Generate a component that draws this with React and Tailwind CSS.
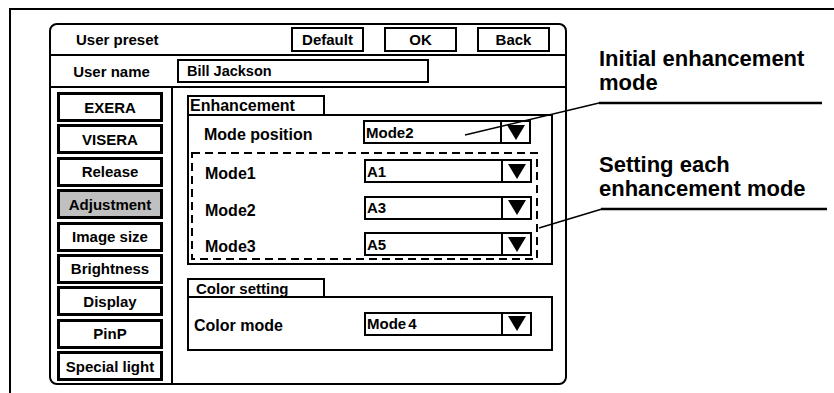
import React from "react";

const Arrow = () => (
  <svg width="18" height="15" viewBox="0 0 18 15">
    <polygon points="0,0 18,0 9,15" fill="black" />
  </svg>
);

function Select({ children }) {
  return (
    <div className="flex h-[24px] w-[168px] shrink-0 border-2 border-black bg-white">
      <div className="flex flex-1 items-center pl-[1px] text-[15px] leading-none">{children}</div>
      <div className="flex w-[29px] items-center justify-center border-l-2 border-black">
        <Arrow />
      </div>
    </div>
  );
}

function Row({ label, value, labelClass = "w-[159px]" }) {
  return (
    <div className="relative flex h-[24px] items-start">
      <div className={`${labelClass} mt-[7px] text-[16px] leading-[16px]`}>{label}</div>
      <Select>{value}</Select>
    </div>
  );
}

const sideItems = [
  "EXERA",
  "VISERA",
  "Release",
  "Adjustment",
  "Image size",
  "Brightness",
  "Display",
  "PinP",
  "Special light",
];

export default function App() {
  return (
    <div
      className="relative h-[393px] w-[834px] overflow-hidden bg-white font-bold text-black"
      style={{ fontFamily: '"Liberation Sans", Arial, sans-serif' }}
    >
      <div className="ml-[9px] mt-[8px] flex h-[385px] border-l-2 border-t-2 border-black">
        {/* Panel */}
        <div className="ml-[38px] mt-[13px] flex h-[362px] w-[518px] shrink-0 flex-col rounded-[8px] border-2 border-black bg-white">
          {/* Header row */}
          <div className="flex h-[31px] shrink-0 items-center border-b-2 border-black pl-[25px] pr-[15px]">
            <div className="text-[15px] leading-none">User preset</div>
            <div className="ml-auto flex gap-[20px]">
              <div className="flex h-[25px] w-[73px] items-center justify-center border-2 border-black text-[15px] leading-none">
                Default
              </div>
              <div className="flex h-[25px] w-[73px] items-center justify-center border-2 border-black text-[15px] leading-none">
                OK
              </div>
              <div className="flex h-[25px] w-[73px] items-center justify-center border-2 border-black text-[15px] leading-none">
                Back
              </div>
            </div>
          </div>
          {/* User name row */}
          <div className="flex h-[32px] shrink-0 items-center border-b-2 border-black">
            <div className="w-[121px] text-center text-[15px] leading-none">User name</div>
            <div className="ml-[5px] flex h-[24px] w-[252px] items-center border-2 border-black pl-[8px] text-[14.5px] leading-none">
              Bill Jackson
            </div>
          </div>
          {/* Body */}
          <div className="flex flex-1">
            <div className="flex w-[122px] shrink-0 flex-col gap-[2.4px] border-r-2 border-black pl-[6px] pt-[4px]">
              {sideItems.map((s) => (
                <div
                  key={s}
                  className={`flex h-[30px] w-[106px] items-center justify-center border-[3px] border-black text-[15px] leading-none ${
                    s === "Adjustment" ? "bg-[#c0c0c0]" : "bg-white"
                  }`}
                >
                  {s}
                </div>
              ))}
            </div>
            <div className="flex flex-1 flex-col pl-[14px] pt-[7px]">
              {/* Enhancement */}
              <div className="flex h-[19px] w-[138px] items-center border-2 border-b-0 border-black pl-[1px] text-[16px] leading-none">
                Enhancement
              </div>
              <div className="flex h-[151px] w-[366px] flex-col border-2 border-black pl-[15px] pt-[4px]">
                <Row label="Mode position" value="Mode2" />
                <div className="relative ml-[-13px] mt-[8px] flex h-[108px] w-[347px] flex-col gap-[12.5px] pl-[14px] pt-[7px]">
                  <svg className="pointer-events-none absolute left-0 top-0" width="347" height="108">
                    <rect
                      x="1"
                      y="1"
                      width="345"
                      height="106"
                      fill="none"
                      stroke="black"
                      strokeWidth="2"
                      strokeDasharray="8 5"
                    />
                  </svg>
                  <Row label="Mode1" value="A1" />
                  <Row label="Mode2" value="A3" />
                  <Row label="Mode3" value="A5" />
                </div>
              </div>
              {/* Color setting */}
              <div className="mt-[13px] flex h-[18px] w-[138px] items-center border-2 border-b-0 border-black pl-[7px] text-[15px] leading-none">
                Color setting
              </div>
              <div className="flex h-[55px] w-[366px] items-center border-2 border-black pl-[5px]">
                <div className="flex h-[24px] items-start">
                  <div className="mt-[6px] w-[170px] text-[16px] leading-[16px]">Color mode</div>
                  <Select>
                    Mode<span className="ml-[2px]">4</span>
                  </Select>
                </div>
              </div>
            </div>
          </div>
        </div>
        {/* Annotations */}
        <div className="ml-[32px] flex flex-col text-[22px] leading-[24px]">
          <div className="mt-[37px]">
            Initial enhancement
            <br />
            mode
          </div>
          <div className="mt-[58px]">
            Setting each
            <br />
            enhancement mode
          </div>
        </div>
      </div>
      {/* Leader lines */}
      <svg className="pointer-events-none absolute left-0 top-0" width="834" height="393">
        <line x1="465" y1="135" x2="599" y2="103" stroke="black" strokeWidth="1.5" />
        <line x1="599" y1="103" x2="822" y2="103" stroke="black" strokeWidth="2.5" />
        <line x1="539" y1="228" x2="602" y2="209" stroke="black" strokeWidth="1.5" />
        <line x1="601" y1="209" x2="827" y2="209" stroke="black" strokeWidth="2.5" />
      </svg>
    </div>
  );
}
